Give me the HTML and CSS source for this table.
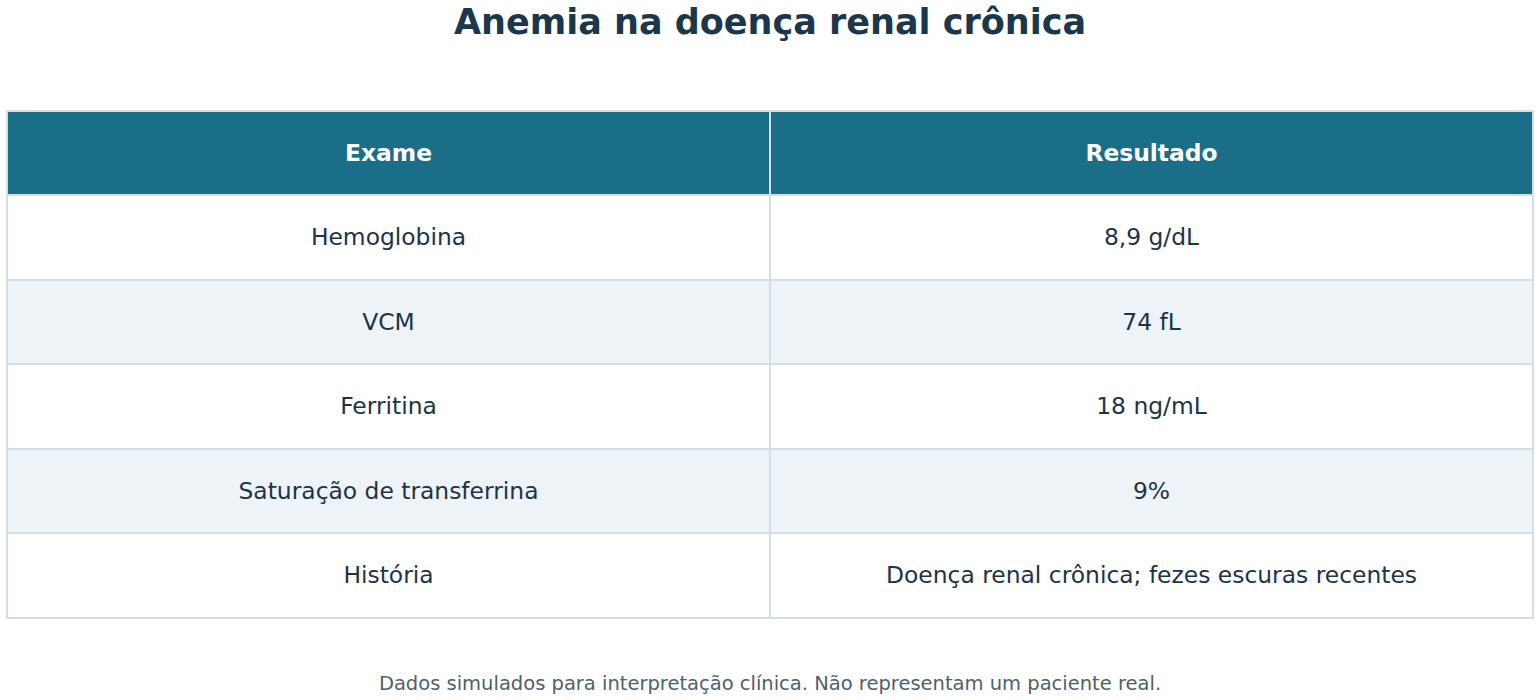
FILE: index.html
```html
<!DOCTYPE html>
<html lang="pt">
<head>
<meta charset="utf-8">
<title>Anemia na doença renal crônica</title>
<link rel="stylesheet" href="styles.css">
</head>
<body>
<main class="page">
  <h1 class="title">Anemia na doença renal crônica</h1>
  <table class="results">
    <thead>
      <tr><th>Exame</th><th>Resultado</th></tr>
    </thead>
    <tbody>
      <tr><td>Hemoglobina</td><td>8,9 g/dL</td></tr>
      <tr><td>VCM</td><td>74 fL</td></tr>
      <tr><td>Ferritina</td><td>18 ng/mL</td></tr>
      <tr><td>Saturação de transferrina</td><td>9%</td></tr>
      <tr><td>História</td><td>Doença renal crônica; fezes escuras recentes</td></tr>
    </tbody>
  </table>
  <p class="note">Dados simulados para interpretação clínica. Não representam um paciente real.</p>
</main>
</body>
</html>
```
FILE: styles.css
```css
html, body {
  margin: 0;
  padding: 0;
  background: #ffffff;
}
body {
  font-family: "DejaVu Sans", sans-serif;
  color: #1c3447;
}
.page {
  display: flex;
  flex-direction: column;
  align-items: stretch;
  padding: 0 6px;
}
.title {
  margin: -1px 0 0 0;
  height: 111px;
  font-size: 35px;
  line-height: 46px;
  font-weight: bold;
  text-align: center;
  color: #1b374b;
}
.results {
  width: 100%;
  border-collapse: collapse;
  table-layout: fixed;
  border: 2px solid #d3dfe7;
}
.results th,
.results td {
  border: 2px solid #d3dfe7;
  text-align: center;
  vertical-align: middle;
  font-size: 23.4px;
  padding: 0;
}
.results th {
  background: #1a6e87;
  color: #ffffff;
  font-weight: bold;
  height: 82px;
}
.results td {
  height: 82.5px;
  color: #1c3447;
}
.results tbody tr:nth-child(even) td {
  background: #eef3f7;
}
.note {
  margin: 53px 0 0 0;
  text-align: center;
  font-size: 19.5px;
  color: #4f5f6e;
}
```
